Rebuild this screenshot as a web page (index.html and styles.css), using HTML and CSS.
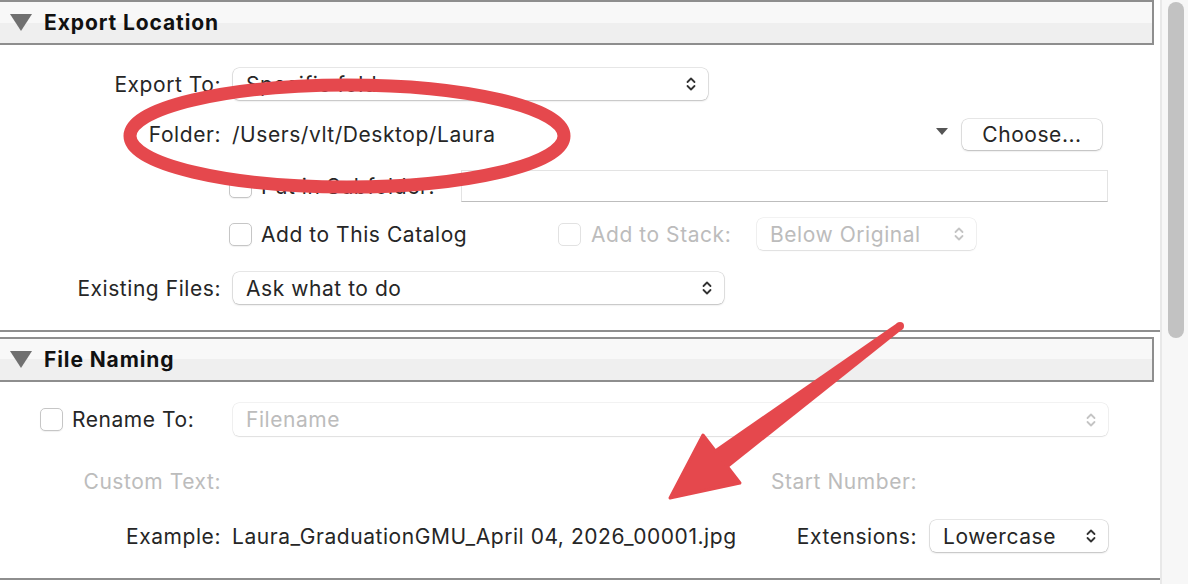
FILE: index.html
```html
<!DOCTYPE html>
<html lang="en">
<head>
    <meta charset="UTF-8">
    <title>Export Location</title>
    <link rel="stylesheet" href="styles.css">
</head>
<body>
<div class="window">
    <div class="panel">

        <!-- Export Location -->
        <section class="section">
            <div class="section-head">
                <svg class="disclosure" width="22" height="17" viewBox="0 0 22 17"><polygon points="0,0 22,0 11,17" fill="#707070"/></svg>
                Export Location
            </div>
            <div class="section-body body-location">
                <div class="row row-export">
                    <span class="label">Export To:</span>
                    <div class="popup popup-export">
                        <span>Specific folder</span>
                        <svg class="chev" width="10" height="16" viewBox="0 0 10 16"><path d="M1.5 6 L5 2.5 L8.5 6 M1.5 10 L5 13.5 L8.5 10" fill="none" stroke="#333" stroke-width="1.8" stroke-linecap="round" stroke-linejoin="round"/></svg>
                    </div>
                </div>
                <div class="row row-folder">
                    <span class="label">Folder:</span>
                    <span class="value">/Users/vlt/Desktop/Laura</span>
                    <svg class="recent" width="12" height="7" viewBox="0 0 12 7"><polygon points="0,0 12,0 6,7" fill="#555"/></svg>
                    <button class="button">Choose...</button>
                </div>
                <div class="row row-subfolder">
                    <span class="label"></span>
                    <span class="check"></span>
                    <span class="check-text subfolder-text">Put in Subfolder:</span>
                    <span class="textfield"></span>
                </div>
                <div class="row row-catalog">
                    <span class="label"></span>
                    <span class="check"></span>
                    <span class="check-text catalog-text">Add to This Catalog</span>
                    <span class="check disabled"></span>
                    <span class="check-text stack-text dim">Add to Stack:</span>
                    <div class="popup popup-stack dim">
                        <span>Below Original</span>
                        <svg class="chev" width="10" height="16" viewBox="0 0 10 16"><path d="M1.5 6 L5 2.5 L8.5 6 M1.5 10 L5 13.5 L8.5 10" fill="none" stroke="#c4c4c4" stroke-width="1.8" stroke-linecap="round" stroke-linejoin="round"/></svg>
                    </div>
                </div>
                <div class="row row-existing">
                    <span class="label">Existing Files:</span>
                    <div class="popup popup-existing">
                        <span>Ask what to do</span>
                        <svg class="chev" width="10" height="16" viewBox="0 0 10 16"><path d="M1.5 6 L5 2.5 L8.5 6 M1.5 10 L5 13.5 L8.5 10" fill="none" stroke="#333" stroke-width="1.8" stroke-linecap="round" stroke-linejoin="round"/></svg>
                    </div>
                </div>
            </div>
        </section>

        <!-- File Naming -->
        <section class="section">
            <div class="section-head">
                <svg class="disclosure" width="22" height="17" viewBox="0 0 22 17"><polygon points="0,0 22,0 11,17" fill="#707070"/></svg>
                File Naming
            </div>
            <div class="section-body body-naming">
                <div class="row row-rename">
                    <span class="label label-check">
                        <span class="check"></span>
                        <span class="check-text">Rename To:</span>
                    </span>
                    <div class="popup popup-filename dim">
                        <span>Filename</span>
                        <svg class="chev" width="10" height="16" viewBox="0 0 10 16"><path d="M1.5 6 L5 2.5 L8.5 6 M1.5 10 L5 13.5 L8.5 10" fill="none" stroke="#c4c4c4" stroke-width="1.8" stroke-linecap="round" stroke-linejoin="round"/></svg>
                    </div>
                </div>
                <div class="row row-custom">
                    <span class="label dim">Custom Text:</span>
                    <div class="right-group">
                        <span class="dim">Start Number:</span>
                        <span class="spacer"></span>
                    </div>
                </div>
                <div class="row row-example">
                    <span class="label">Example:</span>
                    <span class="value">Laura_GraduationGMU_April 04, 2026_00001.jpg</span>
                    <div class="right-group">
                        <span>Extensions:</span>
                        <div class="popup popup-ext">
                            <span>Lowercase</span>
                            <svg class="chev" width="10" height="16" viewBox="0 0 10 16"><path d="M1.5 6 L5 2.5 L8.5 6 M1.5 10 L5 13.5 L8.5 10" fill="none" stroke="#333" stroke-width="1.8" stroke-linecap="round" stroke-linejoin="round"/></svg>
                        </div>
                    </div>
                </div>
            </div>
        </section>

    </div>
    <div class="scrollbar"><div class="thumb"></div></div>
</div>

<!-- red markup drawn over the screenshot -->
<svg class="markup" width="1188" height="584" viewBox="0 0 1188 584">
    <ellipse cx="347" cy="136" rx="217" ry="51" fill="none" stroke="#e5484d" stroke-width="13"/>
    <polygon points="897.6,322.8 902.4,329.2 728,468 714,450" fill="#e5484d"/>
    <circle cx="900" cy="326" r="4" fill="#e5484d"/>
    <polygon points="670,498 703,435 740,483" fill="#e5484d" stroke="#e5484d" stroke-width="3" stroke-linejoin="round"/>
</svg>
</body>
</html>
```

FILE: styles.css
```css
html, body {
    margin: 0;
    height: 100%;
    overflow: hidden;
    background: #fff;
}
body {
    font-family: Inter, "Liberation Sans", sans-serif;
    font-size: 21px;
    letter-spacing: 0.55px;
    color: #262626;
    position: relative;
}
.window {
    display: flex;
    height: 584px;
}
.panel {
    width: 1160px;
    flex: none;
}
.section-head {
    display: flex;
    align-items: center;
    height: 41px;
    margin-right: 6px;
    border: 2px solid #8e8e8e;
    border-left: none;
    background: linear-gradient(#f8f8f8 0, #f8f8f8 50%, #efefef 50%, #efefef 100%);
    font-weight: 700;
    letter-spacing: 0.9px;
    color: #111;
}
.disclosure {
    margin: 0 12px 0 10px;
}
.section + .section {
    margin-top: 5px;
}
.section-body {
    border-bottom: 2px solid #8e8e8e;
    padding-right: 52px;
}
.body-location {
    padding-top: 23px;
    padding-bottom: 26px;
}
.body-naming {
    padding-top: 21px;
    padding-bottom: 26px;
}
.row {
    display: flex;
    align-items: center;
    height: 32px;
}
.row-folder { margin-top: 18px; }
.row-subfolder { margin-top: 20px; }
.row-catalog { margin-top: 16px; }
.row-existing { margin-top: 22px; }
.row-rename { height: 33px; }
.row-custom { margin-top: 29px; }
.row-example { margin-top: 23px; }

.label {
    width: 221px;
    flex: none;
    text-align: right;
    margin-right: 8px;
}
.label-check {
    display: flex;
    align-items: center;
    text-align: left;
    padding-left: 40px;
    width: 181px;
}
.value {
    padding-left: 3px;
}
.dim {
    color: #bcbcbc;
}

.popup {
    display: flex;
    align-items: center;
    justify-content: space-between;
    box-sizing: border-box;
    height: 32px;
    margin-left: 4px;
    padding: 0 12px 0 13px;
    background: #fff;
    border-radius: 6px;
    box-shadow: 0 0 0 0.5px rgba(0, 0, 0, 0.18), 0 1px 2px rgba(0, 0, 0, 0.18);
}
.popup.dim {
    box-shadow: 0 0 0 0.5px rgba(0, 0, 0, 0.1), 0 1px 1.5px rgba(0, 0, 0, 0.08);
}
.popup-export { width: 475px; }
.popup-existing { width: 491px; }
.popup-stack { width: 219px; margin-left: 0; }
.popup-filename { flex: 1; height: 33px; }
.popup-ext { width: 178px; margin-left: 13px; }

.check {
    box-sizing: border-box;
    width: 23px;
    height: 23px;
    flex: none;
    border: 1px solid #c6c6c6;
    border-radius: 5px;
    background: #fff;
    box-shadow: 0 1px 1px rgba(0, 0, 0, 0.06);
}
.check.disabled {
    border-color: #e2e2e2;
    box-shadow: none;
}
.check-text {
    margin-left: 9px;
}
.subfolder-text {
    width: 200px;
    flex: none;
}
.catalog-text {
    width: 297px;
}
.stack-text {
    width: 166px;
    margin-left: 10px;
}
.textfield {
    flex: 1;
    height: 32px;
    box-sizing: border-box;
    border: 1px solid #e3e3e3;
    border-bottom-color: #bdbdbd;
}

.recent {
    margin-left: auto;
    margin-right: 14px;
    margin-top: -6px;
}
.button {
    width: 140px;
    height: 31px;
    margin-right: 6px;
    border: none;
    border-radius: 6px;
    background: #fff;
    box-shadow: 0 0 0 0.5px rgba(0, 0, 0, 0.18), 0 1px 2px rgba(0, 0, 0, 0.2);
    font: inherit;
    letter-spacing: inherit;
    color: #262626;
    padding: 0;
}

.right-group {
    display: flex;
    align-items: center;
    margin-left: auto;
}
.spacer {
    width: 178px;
    margin-left: 13px;
}

.scrollbar {
    flex: 1;
    background: #f7f7f7;
    border-left: 2px solid #e8e8e8;
}
.thumb {
    width: 16px;
    height: 336px;
    margin: 2px 0 0 6px;
    border-radius: 8px;
    background: #c2c2c2;
}

.markup {
    position: absolute;
    top: 0;
    left: 0;
    pointer-events: none;
}
```
